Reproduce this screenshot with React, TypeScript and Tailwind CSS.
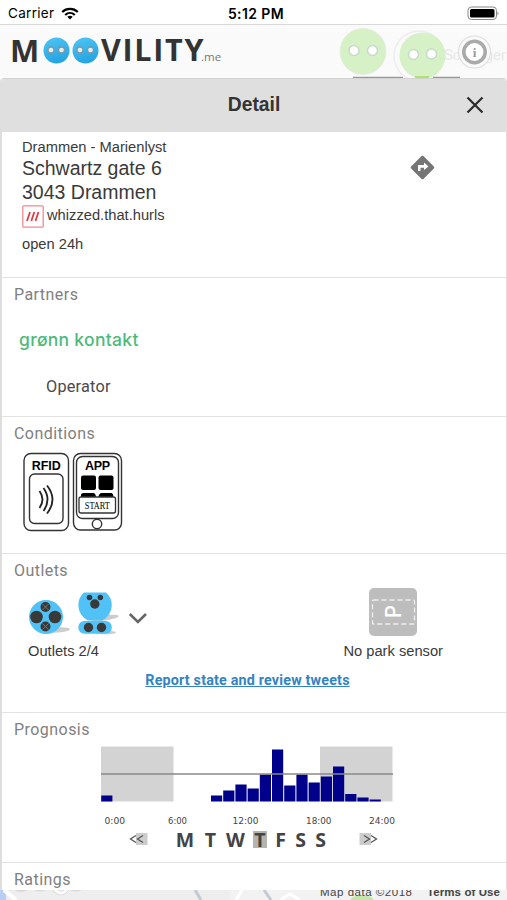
import type { ReactNode } from "react";
import clsx from "clsx";

const prognosis = [6, 0, 0, 0, 0, 0, 0, 0, 0, 6, 11, 17, 13, 27, 52, 16, 27, 19, 25, 35, 7.5, 4, 2];

const days = [
  { label: "M", width: "w-[30px]" },
  { label: "T", width: "w-[21px]" },
  { label: "W", width: "w-[29px]" },
  { label: "T", width: "w-[20px]", active: true },
  { label: "F", width: "w-[21px]" },
  { label: "S", width: "w-[19px]" },
  { label: "S", width: "w-[21px]" },
];

const Section = ({ title, className, children }: { title: string; className: string; children?: ReactNode }) => (
  <section className={clsx("border-t-[1.5px] border-[#e2e2e2]", className)}>
    <h2 className="pl-3 pt-[7px] font-['Roboto',sans-serif] text-[16px] leading-[20px] tracking-[0.45px] text-[#808080]">
      {title}
    </h2>
    {children}
  </section>
);

const StatusBar = () => (
  <div className="grid h-[25px] grid-cols-3 items-center border-b border-[#d8d8d8] bg-white px-2 pt-[3px] font-['Inter',sans-serif] text-black">
    <div className="flex items-center gap-[7px]">
      <span className="text-[13.5px] tracking-[0.3px]">Carrier</span>
      <svg width="18" height="13" viewBox="0 0 18 13" fill="none" stroke="#000" strokeWidth="2.2">
        <path d="M1.2 5C5.5.8 12.5.8 16.8 5" />
        <path d="M4.2 8C7 5.3 11 5.3 13.8 8" />
        <path d="M9 12.5L6.3 9.8Q9 7.6 11.7 9.8Z" fill="#000" stroke="none" />
      </svg>
    </div>
    <span className="pl-[5px] text-center text-[14px] font-semibold tracking-[0.4px]">5:12 PM</span>
    <svg className="justify-self-end" width="34" height="15" viewBox="0 0 34 15">
      <rect x="3" y="1" width="28.5" height="12.5" rx="3.5" fill="none" stroke="#888" strokeWidth="1" />
      <rect x="5" y="3" width="24.5" height="8.5" rx="1.5" fill="#000" />
      <path d="M32.5 5.5Q34.5 7.3 32.5 9.2Z" fill="#888" />
    </svg>
  </div>
);

const BlueFace = () => (
  <svg className="shrink-0" width="27" height="27" viewBox="0 0 27 27">
    <defs>
      <linearGradient id="face" x1="0" y1="0" x2="0.3" y2="1">
        <stop offset="0" stopColor="#4ec6f5" />
        <stop offset="1" stopColor="#27a5e3" />
      </linearGradient>
    </defs>
    <circle cx="13.5" cy="13.5" r="13" fill="url(#face)" />
    <circle cx="8" cy="13" r="3" fill="#e7eef1" stroke="#7b98a6" strokeWidth="1.3" />
    <circle cx="18.5" cy="13" r="3" fill="#e7eef1" stroke="#7b98a6" strokeWidth="1.3" />
  </svg>
);

const TopBar = () => (
  <header className="relative h-[53px] overflow-hidden bg-[#fafafa]">
    <div className="flex h-[50px] items-center pl-[10px] font-['Open_Sans',sans-serif] text-[#333]">
      <span className="w-[33px] text-[31px] font-bold">M</span>
      <BlueFace />
      <span className="w-[2px]" />
      <BlueFace />
      <span className="w-[102px] pl-[2px] text-[30.5px] font-bold tracking-[1.7px]">VILITY</span>
      <span className="mt-[14px] text-[11.5px] tracking-[0.1px] text-[#777]">.me</span>
    </div>
    {/* map pins showing through the bar */}
    <svg className="absolute right-0 top-0" width="177" height="53" viewBox="330 25 177 53">
      <circle cx="363" cy="51.5" r="23" fill="#d5f1c5" stroke="#e6eee1" />
      <circle cx="419" cy="56" r="25" fill="none" stroke="#ededed" strokeWidth="1.5" />
      <circle cx="422.5" cy="55.5" r="23" fill="#d5f1c5" />
      <g fill="#fff" stroke="#c9d9cc" strokeWidth="1.5">
        <circle cx="354" cy="50.5" r="5" />
        <circle cx="372.5" cy="50.5" r="5" />
        <circle cx="413.5" cy="54.5" r="5" />
        <circle cx="431.5" cy="54" r="5" />
      </g>
      <text x="444" y="60" fontFamily="Roboto" fontSize="15" fill="#e8e8e8" textLength="62">Schanger</text>
      <circle cx="474.5" cy="52" r="16" fill="#fafafa" fillOpacity=".8" stroke="#dedede" strokeWidth="1.2" />
      <circle cx="474.5" cy="52" r="10.7" fill="#fff" stroke="#aaa" strokeWidth="3.6" />
      <text x="474.5" y="56.5" textAnchor="middle" fontFamily="Liberation Serif" fontSize="13" fontWeight="bold" fill="#999">i</text>
      <path d="M353 77.3H403M433 77.3H460" stroke="#999" strokeWidth="1.3" />
      <path d="M415 77H429" stroke="#a0df50" strokeWidth="1.5" />
    </svg>
  </header>
);

const Address = () => (
  <section className="relative h-[145px] pl-5 pt-[5px] text-[#3a3a3a]">
    <p className="text-[14.7px] leading-[20px]">Drammen - Marienlyst</p>
    <p className="-mt-px text-[19.5px] leading-[24px]">Schwartz gate 6</p>
    <p className="text-[19.5px] leading-[24px]">3043 Drammen</p>
    <div className="mt-px flex h-[23px] items-center gap-[3px]">
      <svg width="22" height="23" viewBox="0 0 22 23">
        <rect x=".8" y=".8" width="20.4" height="21.4" rx="1" fill="#fff" stroke="#ef8b91" strokeWidth="1.3" />
        <path d="M5 16L8 7M9.3 16L12.3 7M13.5 16L16.5 7" stroke="#dd3d46" strokeWidth="1.8" />
      </svg>
      <span className="pb-[3px] text-[14.7px] leading-[20px]">whizzed.that.hurls</span>
    </div>
    <p className="pt-[6px] text-[14.7px] leading-[20px]">open 24h</p>
    <svg className="absolute left-[407px] top-[22px]" width="27" height="27" viewBox="0 0 27 27">
      <rect x="4.8" y="4.8" width="17.4" height="17.4" rx="1.3" transform="rotate(45 13.5 13.5)" fill="#757575" />
      <path d="M9 17V11.5Q9 11 9.5 11H15V8.5L19.5 12.5L15 16V13.8H11.5V17Z" fill="#fff" />
    </svg>
  </section>
);

const Conditions = () => (
  <svg className="ml-5 mt-[7px]" width="102" height="82" viewBox="22 451 102 82">
    <g fill="#fff" stroke="#333" strokeWidth="1.4">
      <rect x="24" y="453.5" width="44.5" height="77" rx="7" />
      <rect x="29.5" y="474" width="33.5" height="49.5" rx="5" />
      <rect x="73.5" y="453.5" width="48" height="76.5" rx="7" />
      <rect x="76.5" y="456.5" width="42" height="62" rx="6" />
      <circle cx="97" cy="524" r="4.7" />
    </g>
    <path d="M39.5 491Q45.5 499.5 39.5 508M43.5 488Q51.5 499.5 43.5 511M47 485.5Q58 499.5 47 513.5" fill="none" stroke="#222" strokeWidth="1.8" />
    <rect x="81" y="475.5" width="15" height="14.5" rx="2" />
    <rect x="98.5" y="475.5" width="15" height="14.5" rx="2" />
    <path d="M81 498V495Q81 493 84 493H93Q96 493 96 498ZM98.5 498Q98.5 493 102 493H111Q113.5 493 113.5 498Z" />
    <rect x="79" y="497" width="36.5" height="16" rx="2" fill="#fff" stroke="#333" strokeWidth="1.3" />
    <g fontFamily="Liberation Sans" fontWeight="bold" fontSize="12.5" textAnchor="middle">
      <text x="46.3" y="469.5" textLength="29">RFID</text>
      <text x="97.5" y="469.5" textLength="25">APP</text>
    </g>
    <text x="97.3" y="508.8" textAnchor="middle" fontFamily="Liberation Serif" fontSize="10" textLength="25" lengthAdjust="spacingAndGlyphs">START</text>
  </svg>
);

const Plugs = () => (
  <svg width="122" height="46" viewBox="28 591 122 46">
    <ellipse cx="58" cy="630" rx="12" ry="2.5" fill="#ccc" transform="rotate(-4 58 630)" />
    <circle cx="46" cy="617" r="17" fill="#51c2f7" />
    <g fill="#393939">
      <circle cx="36.5" cy="617" r="6.3" />
      <circle cx="55" cy="617" r="6.3" />
      <circle cx="45.5" cy="607" r="5" />
      <circle cx="45.5" cy="626.5" r="5" />
    </g>
    <path d="M42.5 604L48.5 610M48.5 604L42.5 610M42.5 623.5L48.5 629.5M48.5 623.5L42.5 629.5" stroke="#817d72" strokeWidth=".9" />
    <ellipse cx="105" cy="618" rx="14" ry="2.5" fill="#ccc" transform="rotate(-8 105 618)" />
    <ellipse cx="106" cy="632.5" rx="10" ry="1.8" fill="#ccc" />
    <path d="M84 592.5H106Q111.8 597.5 111.8 605Q111.5 615.5 102 620.5H88Q78.5 615.5 78.3 605Q78.3 597.5 84 592.5Z" fill="#51c2f7" />
    <rect x="78.3" y="621" width="33.5" height="12.7" rx="6" fill="#51c2f7" />
    <g fill="#393939">
      <circle cx="89.5" cy="597.5" r="2.8" />
      <circle cx="100.3" cy="597.5" r="2.8" />
      <circle cx="94.8" cy="604" r="4.7" />
      <circle cx="88.5" cy="627.5" r="4.7" />
      <circle cx="101.5" cy="627.5" r="4.7" />
    </g>
    <path d="M129.8 614L137.9 622L146 614" fill="none" stroke="#666" strokeWidth="2.6" />
  </svg>
);

const Outlets = () => (
  <>
    <div className="flex justify-between pl-[26px] pr-[63px]">
      <div className="pt-[10px]">
        <Plugs />
        <p className="pt-[4px] text-[14.7px] leading-[20px] text-[#3a3a3a]">Outlets 2/4</p>
      </div>
      <div className="flex flex-col items-center pt-[7px]">
        <svg width="48" height="48" viewBox="0 0 48 48">
          <rect width="48" height="48" rx="5" fill="#bdbdbd" />
          <rect x="3.5" y="12" width="42" height="24" rx="1" fill="none" stroke="#eee" strokeWidth="1.3" strokeDasharray="5 3" />
          <text transform="translate(32 30) rotate(-90)" fontFamily="Inter" fontSize="22" fontWeight="500" fill="#fff" textLength="13" lengthAdjust="spacingAndGlyphs">P</text>
        </svg>
        <p className="pt-[5px] text-[14.7px] leading-[20px] text-[#3a3a3a]">No park sensor</p>
      </div>
    </div>
    <a className="mt-[10px] block pr-[13px] text-center font-['Roboto',sans-serif] text-[14.3px] font-bold leading-[18px] tracking-[0.19px] text-[#3383c5] underline">
      Report state and review tweets
    </a>
  </>
);

const Chart = () => (
  <svg className="ml-[98px] mt-[6px]" width="298" height="81" viewBox="100 746 298 81">
    <rect x="101" y="746.5" width="72.5" height="55" fill="#d3d3d3" />
    <rect x="320" y="746.5" width="72.5" height="55" fill="#d3d3d3" />
    {prognosis.map((value, i) => (
      <rect key={i} x={101.2 + i * 12.2} y={801.5 - value} width="11.2" height={value} fill="#00008b" />
    ))}
    <path d="M101 774H393" stroke="#888" strokeWidth="1.4" />
    <g fontFamily="DejaVu Sans" fontSize="9.5" fill="#444">
      <text x="104.5" y="823.5" textLength="20.5" lengthAdjust="spacingAndGlyphs">0:00</text>
      <text x="168" y="823.5" textLength="19" lengthAdjust="spacingAndGlyphs">6:00</text>
      <text x="232.5" y="823.5" textLength="26" lengthAdjust="spacingAndGlyphs">12:00</text>
      <text x="306" y="823.5" textLength="25.5" lengthAdjust="spacingAndGlyphs">18:00</text>
      <text x="369" y="823.5" textLength="26" lengthAdjust="spacingAndGlyphs">24:00</text>
    </g>
  </svg>
);

const Arrow = ({ flip }: { flip?: boolean }) => (
  <svg className={clsx(flip && "rotate-180")} width="20" height="14" viewBox="0 0 20 14">
    <rect x="8" y="1" width="11.5" height="12" fill="#ccc" />
    <path d="M8 3.5L2.5 7L8 10.5M15 3.5L9.5 7L15 10.5" fill="none" stroke="#555" strokeWidth="1.3" />
  </svg>
);

const Prognosis = () => (
  <>
    <Chart />
    <div className="flex h-[20px] items-center pl-[126px] pt-[4px]">
      <Arrow />
      <div className="ml-[22px] mr-[28px] flex items-center font-['Open_Sans',sans-serif] text-[19.5px] font-bold leading-[17px] text-[#444]">
        {days.map((day, i) => (
          <span key={i} className={clsx("flex justify-center", day.width)}>
            <span className={clsx(day.active && "bg-[#b5b5b0] px-[1.5px]")}>{day.label}</span>
          </span>
        ))}
      </div>
      <Arrow flip />
    </div>
  </>
);

const MapStrip = () => (
  <div className="h-[10px] overflow-hidden bg-[#eeeeee]">
    <svg width="507" height="10" viewBox="0 890 507 10">
      <rect x="230" y="890" width="277" height="10" fill="#f2f2f2" />
      <path d="M0 890H4Q7 896 6 900H0Z" fill="#b9cdf4" />
      <path d="M4 890L16 900" stroke="#fff" strokeWidth="4" />
      <path d="M195 890L201 900M264 890L271 900" stroke="#c3cad5" strokeWidth="3" />
      <path d="M242 890L236 900M280 900L290 894L300 900" stroke="#fff" strokeWidth="3" fill="none" />
      <ellipse cx="362" cy="901" rx="12" ry="6" fill="#c3e8aa" />
      {/* lower edge of the map provider's wordmark */}
      <path d="M14 889Q21 893 28 889M34 889Q40 892 46 889M70 889Q76 892 82 889" stroke="#dadada" strokeWidth="2" fill="none" />
      <path d="M54 888Q61 898 68 888" stroke="#d4d4d4" strokeWidth="4.5" fill="none" />
      <path d="M54 888Q61 898 68 888" stroke="#fff" strokeWidth="3" fill="none" />
      <text x="320" y="895.5" fontFamily="Liberation Sans" fontSize="11.5" fill="#444" textLength="92">Map data ©2018</text>
      <text x="427" y="896" fontFamily="Liberation Sans" fontSize="11.5" fontWeight="bold" fill="#444" textLength="73">Terms of Use</text>
    </svg>
  </div>
);

export default function App() {
  return (
    <div className="h-[900px] w-[507px] overflow-hidden bg-white font-['Liberation_Sans',sans-serif]">
      <StatusBar />
      <TopBar />
      <div className="h-[812px] overflow-hidden rounded-t-[4px] border-l-2 border-r border-[#dedede] bg-white">
        <div className="relative flex h-[54px] items-center justify-center border-t border-[#d2d2d2] bg-[#dfdfdf]">
          <h1 className="text-[19.3px] font-bold text-[#333]">Detail</h1>
          <svg className="absolute right-[22px] top-[17px]" width="18" height="18" viewBox="0 0 18 18">
            <path d="M1.5 1.5L16.5 16.5M16.5 1.5L1.5 16.5" stroke="#2c2c2c" strokeWidth="2.2" />
          </svg>
        </div>
        <Address />
        <Section title="Partners" className="h-[139px]">
          <p className="pl-[17px] pt-[23px] font-['Inter',sans-serif] text-[17.5px] font-medium leading-[24px] tracking-[0.3px] text-[#4cba7c]">
            grønn kontakt
          </p>
          <p className="pl-[44px] pt-[24px] font-['Roboto',sans-serif] text-[16.3px] leading-[22px] tracking-[0.2px] text-[#4a4a4a]">
            Operator
          </p>
        </Section>
        <Section title="Conditions" className="h-[137px]">
          <Conditions />
        </Section>
        <Section title="Outlets" className="h-[159px]">
          <Outlets />
        </Section>
        <Section title="Prognosis" className="h-[150px]">
          <Prognosis />
        </Section>
        <Section title="Ratings" className="h-[28px]" />
      </div>
      <MapStrip />
    </div>
  );
}
